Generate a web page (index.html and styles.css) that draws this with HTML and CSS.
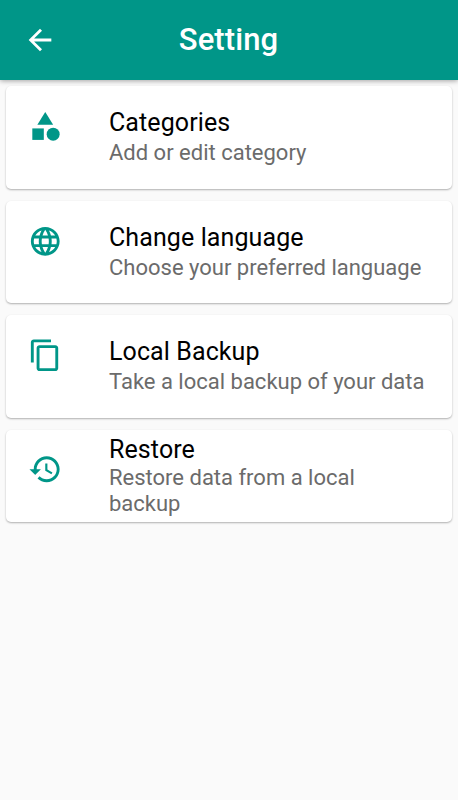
FILE: index.html
```html
<!DOCTYPE html>
<html lang="en">
<head>
<meta charset="utf-8">
<title>Setting</title>
<link rel="stylesheet" href="styles.css">
</head>
<body>
<header class="appbar">
  <svg class="back" viewBox="0 0 24 24"><path d="M20 11H7.83l5.59-5.59L12 4l-8 8 8 8 1.41-1.41L7.83 13H20v-2z"/></svg>
  <h1 class="title">Setting</h1>
</header>
<main class="list">
  <section class="card">
    <svg class="icon" viewBox="0 0 24 24"><path d="M12 2l-5.5 9h11z"/><circle cx="17.5" cy="17.5" r="4.5"/><path d="M3 13.5h8v8H3z"/></svg>
    <div class="text"><h2 class="name">Categories</h2><p class="desc">Add or edit category</p></div>
  </section>
  <section class="card">
    <svg class="icon" viewBox="0 0 24 24"><path d="M11.99 2C6.47 2 2 6.48 2 12s4.47 10 9.99 10C17.52 22 22 17.52 22 12S17.52 2 11.99 2zm6.93 6h-2.95c-.32-1.25-.78-2.45-1.38-3.56 1.84.63 3.37 1.91 4.33 3.56zM12 4.04c.83 1.2 1.48 2.53 1.91 3.96h-3.82c.43-1.43 1.08-2.76 1.91-3.96zM4.26 14C4.1 13.36 4 12.69 4 12s.1-1.36.26-2h3.38c-.08.66-.14 1.32-.14 2s.06 1.34.14 2H4.26zm.82 2h2.95c.32 1.25.78 2.45 1.38 3.56-1.84-.63-3.37-1.9-4.33-3.56zm2.95-8H5.08c.96-1.66 2.49-2.93 4.33-3.56C8.81 5.55 8.35 6.75 8.03 8zM12 19.96c-.83-1.2-1.48-2.53-1.91-3.96h3.82c-.43 1.43-1.08 2.76-1.91 3.96zM14.34 14H9.66c-.09-.66-.16-1.32-.16-2s.07-1.35.16-2h4.68c.09.65.16 1.32.16 2s-.07 1.34-.16 2zm.25 5.56c.6-1.11 1.06-2.31 1.38-3.56h2.95c-.96 1.65-2.49 2.93-4.33 3.56zM16.36 14c.08-.66.14-1.32.14-2s-.06-1.34-.14-2h3.38c.16.64.26 1.31.26 2s-.1 1.36-.26 2h-3.38z"/></svg>
    <div class="text"><h2 class="name">Change language</h2><p class="desc">Choose your preferred language</p></div>
  </section>
  <section class="card">
    <svg class="icon" viewBox="0 0 24 24"><path d="M16 1H4c-1.1 0-2 .9-2 2v14h2V3h12V1zm3 4H8c-1.1 0-2 .9-2 2v14c0 1.1.9 2 2 2h11c1.1 0 2-.9 2-2V7c0-1.1-.9-2-2-2zm0 16H8V7h11v14z"/></svg>
    <div class="text"><h2 class="name">Local Backup</h2><p class="desc">Take a local backup of your data</p></div>
  </section>
  <section class="card card-compact">
    <svg class="icon" viewBox="0 0 24 24"><path d="M13 3c-4.97 0-9 4.03-9 9H1l3.89 3.89.07.14L9 12H6c0-3.87 3.13-7 7-7s7 3.13 7 7-3.13 7-7 7c-1.93 0-3.68-.79-4.94-2.06l-1.42 1.42C8.27 19.99 10.51 21 13 21c4.97 0 9-4.03 9-9s-4.03-9-9-9zm-1 5v5l4.28 2.54.72-1.21-3.5-2.08V8H12z"/></svg>
    <div class="text"><h2 class="name">Restore</h2><p class="desc">Restore data from a local backup</p></div>
  </section>
</main>
</body>
</html>
```
FILE: styles.css
```css
* { box-sizing: border-box; margin: 0; }
body { min-height: 800px; background: #fafafa; font-family: Roboto, sans-serif; }
.appbar {
  display: grid;
  grid-template-columns: 80px 1fr 80px;
  align-items: center;
  height: 80px;
  background: #009688;
  color: #fff;
  box-shadow: 0 1px 5px rgba(0, 0, 0, .35);
}
.back { width: 34px; height: 34px; justify-self: center; fill: currentColor; }
.title { padding-right: 1px; text-align: center; font-size: 31px; font-weight: 500; line-height: 36px; letter-spacing: .1px; }
.list { display: flex; flex-direction: column; gap: 12px; padding: 6px; }
.card {
  display: flex;
  align-items: flex-start;
  height: 102.5px;
  padding: 22px 22px 0;
  border-radius: 5px;
  background: #fff;
  box-shadow: 0 1px 2px rgba(0, 0, 0, .3);
}
.icon { flex: none; width: 34.5px; height: 34.5px; margin-top: 1px; fill: #009688; }
.text { margin-left: 46.5px; }
.name { color: #000; font-size: 25px; font-weight: 400; line-height: 29px; letter-spacing: .1px; }
.desc { color: #6b6b6b; font-size: 22px; font-weight: 400; line-height: 26px; margin-top: 3px; }
.card-compact { height: 92px; padding-top: 5px; }
.card-compact .icon { margin-top: 17.5px; }
.card-compact .desc { margin-top: 1px; }
```
